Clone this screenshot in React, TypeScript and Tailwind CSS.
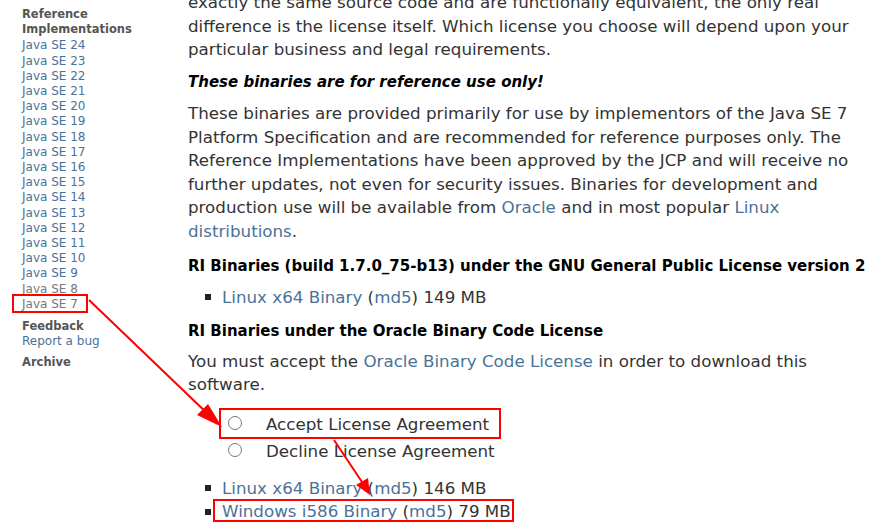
const link = 'text-[#4a7298]';

const versions = [24, 23, 22, 21, 20, 19, 18, 17, 16, 15, 14, 13, 12, 11, 10, 9];

function Sidebar() {
  return (
    <aside className="w-[188px] shrink-0 pl-[22px] pt-[7px] text-[12px] leading-[15.2px]">
      <div className="text-[11.5px] font-bold text-[#555]">
        Reference
        <br />
        Implementations
      </div>
      <ul className="mt-[1px]">
        {versions.map((v) => (
          <li key={v}>
            <a className={link}>Java SE {v}</a>
          </li>
        ))}
        <li className="text-[#777]">Java SE 8</li>
        <li className="text-[#777]">Java SE 7</li>
      </ul>
      <div className="mt-[7px] text-[11.5px] font-bold text-[#555]">Feedback</div>
      <a className={link}>Report a bug</a>
      <div className="mt-[6px] text-[11.5px] font-bold text-[#555]">Archive</div>
    </aside>
  );
}

function Bullet({ children }: { children: React.ReactNode }) {
  return (
    <li className="flex items-center">
      <span className="mr-[11px] ml-[17px] h-[6px] w-[6px] bg-[#222]" />
      <span>{children}</span>
    </li>
  );
}

function Radio({ label }: { label: string }) {
  return (
    <label className="flex items-center">
      <span className="ml-[40px] mr-[24px] -mt-[3px] h-[14px] w-[14px] rounded-full border border-[#777] bg-white" />
      <span>{label}</span>
    </label>
  );
}

function Main() {
  return (
    <main className="-mt-[9px] w-[680px] text-[16.7px] leading-[23.5px] text-[#333]">
      <p>
        exactly the same source code and are functionally equivalent, the only real difference is
        the license itself. Which license you choose will depend upon your particular business and
        legal requirements.
      </p>
      <p className="mt-[9px] text-[15px] font-bold italic text-black">
        These binaries are for reference use only!
      </p>
      <p className="mt-[8px]">
        These binaries are provided primarily for use by implementors of the Java SE 7 Platform
        Specification and are recommended for reference purposes only. The Reference Implementations
        have been approved by the JCP and will receive no further updates, not even for security
        issues. Binaries for development and production use will be available from{' '}
        <a className={link}>Oracle</a> and in most popular <a className={link}>Linux distributions</a>.
      </p>
      <h3 className="mt-[12px] text-[15px] font-bold text-black">
        RI Binaries (build 1.7.0_75-b13) under the GNU General Public License version 2
      </h3>
      <ul className="mt-[7px]">
        <Bullet>
          <a className={link}>Linux x64 Binary</a> (<a className={link}>md5</a>) 149 MB
        </Bullet>
      </ul>
      <h3 className="mt-[11px] text-[15px] font-bold text-black">
        RI Binaries under the Oracle Binary Code License
      </h3>
      <p className="mt-[6px]">
        You must accept the <a className={link}>Oracle Binary Code License</a> in order to download
        this software.
      </p>
      <div className="mt-[16px] flex flex-col gap-[4px]">
        <Radio label="Accept License Agreement" />
        <Radio label="Decline License Agreement" />
      </div>
      <ul className="mt-[13px]">
        <Bullet>
          <a className={link}>Linux x64 Binary</a> (<a className={link}>md5</a>) 146 MB
        </Bullet>
        <Bullet>
          <a className={link}>Windows i586 Binary</a> (<a className={link}>md5</a>) 79 MB
        </Bullet>
      </ul>
    </main>
  );
}

function Annotations() {
  return (
    <svg className="pointer-events-none absolute inset-0" width="872" height="528">
      <g fill="none" stroke="#f00" strokeWidth="2">
        <rect x="13" y="295" width="74" height="17" />
        <rect x="220" y="409" width="280" height="29" />
        <rect x="214" y="500" width="299" height="21" />
        <line x1="89" y1="300" x2="210" y2="416" />
        <line x1="334" y1="440" x2="362" y2="482" />
      </g>
      <g fill="#f00">
        <polygon points="222,427 197,415 208,404" />
        <polygon points="370,495 356,485 368,478" />
      </g>
    </svg>
  );
}

export default function App() {
  return (
    <div className="relative h-[528px] w-[872px] overflow-hidden bg-white font-['DejaVu_Sans',sans-serif]">
      <div className="flex">
        <Sidebar />
        <Main />
      </div>
      <Annotations />
    </div>
  );
}
